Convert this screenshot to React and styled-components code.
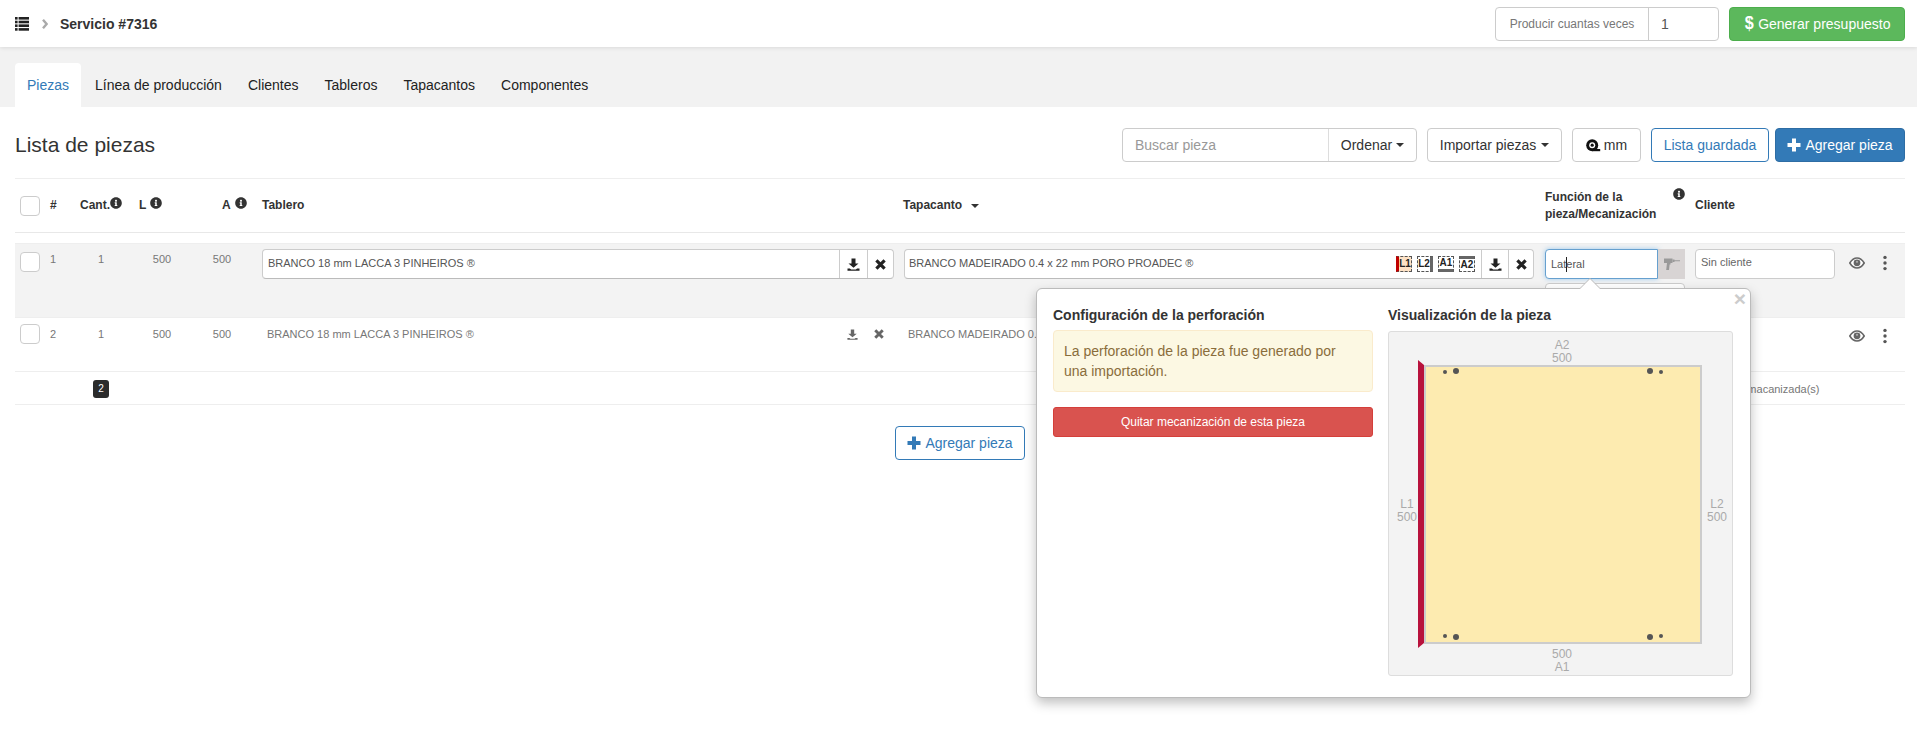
import React from 'react'
import styled, { createGlobalStyle } from 'styled-components'
import { FaInfoCircle } from 'react-icons/fa'

const GlobalStyle = createGlobalStyle`
  * { box-sizing: border-box; }
  html, body { margin: 0; padding: 0; background: #fff; }
  body {
    font-family: "Liberation Sans", Arial, sans-serif;
    font-size: 14px;
    line-height: 20px;
    color: #333;
    overflow: hidden;
  }
`

const Page = styled.div`
  position: relative;
  width: 1917px;
  height: 749px;
  overflow: hidden;
`

const TopBar = styled.header`
  position: relative;
  z-index: 2;
  display: flex;
  justify-content: space-between;
  align-items: center;
  height: 47px;
  padding: 0 12px 0 15px;
  background: #fff;
  box-shadow: 0 1px 4px rgba(0, 0, 0, 0.1);
`

const Crumb = styled.div`
  display: flex;
  align-items: center;
  gap: 13px;
  color: #333;
  font-weight: 700;
  font-size: 14px;

  .angle {
    margin-right: -1px;
  }
`

const TopActions = styled.div`
  display: flex;
  gap: 10px;
`

const Group = styled.div`
  display: flex;
  height: 34px;
  width: ${({ $w }) => $w}px;
  border: 1px solid #ccc;
  border-radius: 4px;
  background: #fff;
`

const GroupLabel = styled.span`
  display: flex;
  align-items: center;
  justify-content: center;
  width: 153px;
  border-right: 1px solid #ccc;
  color: #777;
  font-size: 12px;
`

const TextInput = styled.input`
  flex: 1;
  min-width: 0;
  border: 0;
  outline: 0;
  background: transparent;
  padding: 0 12px;
  font: inherit;
  font-size: 14px;
  color: #555;

  &::placeholder {
    color: #999;
  }
`

const Btn = styled.button`
  display: inline-flex;
  align-items: center;
  justify-content: center;
  gap: ${({ $gap }) => $gap ?? 5}px;
  height: 34px;
  width: ${({ $w }) => $w}px;
  margin-left: ${({ $ml }) => $ml ?? 0}px;
  padding: 0;
  border: 1px solid ${({ $tone }) => ($tone === 'green' ? '#4cae4c' : $tone === 'blue' ? '#2e6da4' : $tone === 'outline' ? '#337ab7' : '#ccc')};
  border-radius: 4px;
  background: ${({ $tone }) => ($tone === 'green' ? '#5cb85c' : $tone === 'blue' ? '#337ab7' : '#fff')};
  color: ${({ $tone }) => ($tone === 'green' || $tone === 'blue' ? '#fff' : $tone === 'outline' ? '#337ab7' : '#333')};
  font: inherit;
  font-size: 14px;
  white-space: nowrap;
`

const Dollar = styled.span`
  font-size: 19px;
  font-weight: 700;
  line-height: 20px;
  margin-top: -2px;
  transform: scaleX(0.85);
`

const Caret = styled.i`
  display: inline-block;
  width: 0;
  height: 0;
  border-top: 4px solid #333;
  border-left: 4px solid transparent;
  border-right: 4px solid transparent;
`

const Tabs = styled.nav`
  display: flex;
  gap: 2px;
  height: 60px;
  padding: 16px 0 0 15px;
  background: #f2f2f2;
`

const Tab = styled.a`
  height: 44px;
  padding: 12px 12px 0;
  border-radius: 4px 4px 0 0;
  background: ${({ $active }) => ($active ? '#fff' : 'transparent')};
  color: ${({ $active }) => ($active ? '#337ab7' : '#222')};
`

const Content = styled.main`
  padding: 21px 12px 0 15px;
`

const TitleRow = styled.div`
  display: flex;
  justify-content: space-between;
  align-items: center;
  height: 34px;
  margin-bottom: 16px;
`

const Title = styled.h2`
  margin: 0;
  font-size: 21px;
  font-weight: 400;
  color: #333;
`

const Tools = styled.div`
  display: flex;
  gap: 10px;
`

const GroupBtn = styled.span`
  display: flex;
  align-items: center;
  justify-content: center;
  gap: 4px;
  width: 88px;
  border-left: 1px solid #ddd;
  color: #333;
`

const Cols = `
  display: grid;
  grid-template-columns: 35px 30px 59px 63px 60px 641px 642px 150px 150px 60px;
`

const TableHead = styled.div`
  ${Cols}
  align-items: center;
  height: 55px;
  border-top: 1px solid #eee;
  border-bottom: 1px solid #e8e8e8;
  margin-bottom: 10px;
`

const HeadCell = styled.div`
  display: flex;
  align-items: center;
  gap: ${({ $gap }) => $gap ?? 0}px;
  padding-left: ${({ $pl }) => $pl ?? 0}px;
  font-size: 12px;
  font-weight: 700;
  line-height: 17px;
  color: #333;

  svg.info {
    width: 12px;
    height: 12px;
    margin-top: -5px;
    color: #333;
  }
  svg.info.high {
    margin-top: -24px;
  }
`

const HeadCaret = styled(Caret)`
  margin-left: -1px;
`

const FnLabel = styled.div`
  width: 128px;
`

const Check = styled.span`
  display: block;
  width: 20px;
  height: 20px;
  margin: ${({ $mt }) => $mt ?? 0}px 0 0 5px;
  border: 1px solid #ccc;
  border-radius: 4px;
  background: #fff;
`

const Row = styled.div`
  ${Cols}
  position: relative;
  height: ${({ $h }) => $h}px;
  padding-top: ${({ $pt }) => $pt}px;
  border-top: 1px solid #eee;
  background: ${({ $active }) => ($active ? '#f3f3f3' : '#fff')};
  font-size: 11px;
  color: #777;
`

const Num = styled.div`
  width: ${({ $w }) => $w}px;
  line-height: 20px;
  text-align: center;
`

const Field = styled.div`
  display: flex;
  align-items: stretch;
  height: 30px;
  width: ${({ $w }) => $w}px;
  margin-left: ${({ $ml }) => $ml ?? 0}px;
  border: 1px solid #ccc;
  border-bottom-color: #bbb;
  border-radius: 4px;
  background: #fff;
  font-size: 11px;
  color: #555;
`

const FieldText = styled.span`
  flex: 1;
  padding: 0 4px 0 ${({ $pl }) => $pl ?? 4}px;
  line-height: 27px;
  white-space: nowrap;
`

const AddOn = styled.span`
  display: flex;
  align-items: center;
  justify-content: center;
  width: ${({ $w }) => $w ?? 27}px;
  border-left: 1px solid #ccc;
  color: #222;
`

const Edges = styled.span`
  display: flex;
  align-items: center;
  gap: 5px;
  padding-right: 6px;
`

const borderFor = ({ $side }) => {
  if ($side === 'L1') return 'border-left: 3px solid #c00000; background: #fde2c6;'
  if ($side === 'L2') return 'border-right: 3px solid #666;'
  if ($side === 'A1') return 'border-bottom: 3px solid #666;'
  return 'border-top: 3px solid #666;'
}

const Edge = styled.span`
  display: flex;
  align-items: center;
  justify-content: center;
  width: 16px;
  height: 16px;
  border: 1px dashed #555;
  font-size: 10px;
  font-weight: 700;
  color: #222;
  ${borderFor}
`

const PlainCell = styled.div`
  display: flex;
  align-items: flex-start;
  width: ${({ $w }) => $w}px;
  padding-left: ${({ $pl }) => $pl}px;
  line-height: 20px;
  white-space: nowrap;
  color: #777;
`

const GhostIcons = styled.div`
  display: flex;
  align-items: center;
  gap: 16px;
  height: 20px;
  margin-left: auto;
  padding-right: 10px;
  color: #666;
`

const FnStack = styled.div`
  display: flex;
  flex-direction: column;
  gap: 4px;
  width: 140px;
`

const FnGroup = styled.div`
  display: flex;
  height: 30px;
`

const FnInput = styled.div`
  display: flex;
  align-items: center;
  width: 113px;
  padding-left: 5px;
  border: 1px solid #66a0cf;
  border-radius: 4px 0 0 4px;
  background: #fff;
  box-shadow: 0 0 5px rgba(102, 175, 233, 0.6);
  font-size: 11px;
  color: #555;
`

const TextCaret = styled.i`
  display: inline-block;
  width: 0;
  height: 15px;
  margin-right: -1px;
  border-left: 1px solid #222;
`

const FnAddOn = styled.span`
  display: flex;
  align-items: center;
  justify-content: center;
  width: 27px;
  background: #d8d4d4;
  color: #999;
`

const GhostInput = styled.div`
  height: 30px;
  border: 1px solid #ccc;
  border-radius: 4px;
  background: #fff;
`

const ClientField = styled.div`
  width: 140px;
  height: 30px;
  padding: 2px 5px 0;
  border: 1px solid #ccc;
  border-radius: 4px;
  background: #fff;
  font-size: 11px;
  line-height: 20px;
  color: #666;
`

const RowActions = styled.div`
  display: flex;
  align-items: center;
  gap: 18px;
  height: ${({ $h }) => $h}px;
  padding-left: 4px;
`

const Foot = styled.div`
  ${Cols}
  position: relative;
  height: 34px;
  padding-top: 2px;
  border-top: 1px solid #eee;
  border-bottom: 1px solid #eee;
  align-items: center;
  font-size: 11px;
  color: #777;
`

const Badge = styled.span`
  display: flex;
  align-items: center;
  justify-content: center;
  width: 16px;
  height: 18px;
  margin-left: 13px;
  border-radius: 3px;
  background: #2b2b2b;
  color: #fff;
  font-size: 10px;
`

const FootNote = styled.span`
  grid-column: 9 / 11;
  white-space: nowrap;
  padding-left: 1px;
`

const AddMore = styled.div`
  display: flex;
  justify-content: center;
  margin-top: 21px;
`

const Popover = styled.aside`
  position: absolute;
  z-index: 5;
  top: 288px;
  left: 1036px;
  display: grid;
  grid-template-columns: 320px 345px;
  column-gap: 15px;
  width: 715px;
  height: 410px;
  padding: 16px 16px 0;
  border: 1px solid #bbb;
  border-radius: 6px;
  background: #fff;
  box-shadow: 0 5px 12px rgba(0, 0, 0, 0.25);

  &::before,
  &::after {
    content: '';
    position: absolute;
    left: 543px;
    width: 0;
    height: 0;
    border-left: 10px solid transparent;
    border-right: 10px solid transparent;
  }
  &::before {
    top: -11px;
    border-bottom: 10px solid #bbb;
  }
  &::after {
    top: -10px;
    border-bottom: 10px solid #fff;
  }
`

const CloseX = styled.span`
  position: absolute;
  top: 0;
  right: 4px;
  color: #ccc;
  font-size: 21px;
  font-weight: 700;
  line-height: 20px;
`

const PopTitle = styled.h4`
  margin: 0;
  font-size: 14px;
  font-weight: 700;
  line-height: 20px;
  color: #333;
`

const Alert = styled.div`
  margin-top: 5px;
  padding: 10px;
  border: 1px solid #faebcc;
  border-radius: 4px;
  background: #fcf8e3;
  color: #8a6d3b;
`

const DangerBtn = styled.button`
  display: block;
  width: 100%;
  height: 30px;
  margin-top: 15px;
  border: 1px solid #d43f3a;
  border-radius: 3px;
  background: #d9534f;
  color: #fff;
  font: inherit;
  font-size: 12px;
`

const Preview = styled.div`
  width: 345px;
  height: 345px;
  margin-top: 6px;
  border: 1px solid #ddd;
  border-radius: 3px;
  background: #f3f3f3;

  svg {
    display: block;
  }
  text {
    font-family: "Liberation Sans", Arial, sans-serif;
    font-size: 12px;
    fill: #aaa;
    text-anchor: middle;
  }
`

const ListIcon = () => (
  <svg width='14' height='14' viewBox='0 0 14 14' fill='#222'>
    {[0, 3.7, 7.4, 11.1].map((y) => (
      <g key={y}>
        <rect x='0' y={y} width='2.6' height='2.6' />
        <rect x='3.6' y={y} width='10.4' height='2.6' />
      </g>
    ))}
  </svg>
)

const AngleIcon = () => (
  <svg className='angle' width='6' height='10' viewBox='0 0 6 10' fill='none' stroke='#aaa' strokeWidth='2.4'>
    <path d='M1 0.8L4.6 5L1 9.2' />
  </svg>
)

const PlusIcon = () => (
  <svg width='14' height='14' viewBox='0 0 14 14' fill='currentColor'>
    <path d='M5 0.5h4v4.5h4.5v4H9v4.5H5V9H0.5V5H5z' />
  </svg>
)

const TapeIcon = () => (
  <svg width='15' height='13' viewBox='0 0 15 13'>
    <circle cx='6.2' cy='6.2' r='6' fill='#111' />
    <circle cx='6.2' cy='6.2' r='3' fill='#fff' />
    <circle cx='6.2' cy='6.2' r='1.6' fill='#111' />
    <rect x='6.2' y='10' width='8' height='2.2' fill='#111' />
  </svg>
)

const DownloadIcon = ({ size = 13 }) => (
  <svg width={size} height={size} viewBox='0 0 13 13' fill='currentColor'>
    <path d='M4.5 0.5h4v5h3L6.5 9.8 1.5 5.5h3z' />
    <path d='M0.5 10.5h2.4l1.2 0.9h4.8l1.2-0.9h2.4v2.2H0.5z' />
  </svg>
)

const RemoveIcon = ({ size = 11 }) => (
  <svg width={size} height={size} viewBox='0 0 11 11' fill='none' stroke='currentColor' strokeWidth='3.2'>
    <path d='M1.4 1.4L9.6 9.6M9.6 1.4L1.4 9.6' />
  </svg>
)

const DrillIcon = () => (
  <svg width='16' height='12' viewBox='0 0 16 12' fill='currentColor'>
    <path d='M0 0.5h8.5v4.5H6.5v1.5H5.6L5 12H2.2L3 5H0z' />
    <path d='M8.5 1.5h2v2.5h-2zM10.5 2.3h5.5v.9h-5.5z' />
  </svg>
)

const EyeIcon = () => (
  <svg width='16' height='12' viewBox='0 0 16 12'>
    <path d='M0.8 6C3 2.4 5.4 1 8 1s5 1.4 7.2 5C13 9.6 10.6 11 8 11S3 9.6 0.8 6z' fill='#fff' stroke='#666' strokeWidth='1.6' />
    <circle cx='8' cy='5.8' r='3.4' fill='#666' />
    <circle cx='8' cy='4.8' r='1.1' fill='#aaa' />
  </svg>
)

const DotsIcon = () => (
  <svg width='4' height='16' viewBox='0 0 4 16' fill='#555'>
    <circle cx='2' cy='2.4' r='1.7' />
    <circle cx='2' cy='8' r='1.7' />
    <circle cx='2' cy='13.6' r='1.7' />
  </svg>
)

const holes = [
  [56, 40, 2],
  [67, 39, 3],
  [261, 39, 3],
  [272, 40, 2],
  [56, 304, 2],
  [67, 305, 3],
  [261, 305, 3],
  [272, 304, 2],
]

// preview of the piece: L1 edge banded, holes in the corners
const PieceDrawing = () => (
  <svg width='343' height='343' viewBox='0 0 343 343'>
    <text x='173' y='17'>A2</text>
    <text x='173' y='30'>500</text>
    <polygon points='29,28 35,33 35,311 29,316' fill='#b8123c' />
    <rect x='36' y='34' width='276' height='277' fill='#fdebb0' stroke='#ccc' strokeWidth='2' />
    {holes.map(([x, y, r]) => (
      <circle key={`${x}-${y}`} cx={x} cy={y} r={r} fill='#555' />
    ))}
    <text x='18' y='176'>L1</text>
    <text x='18' y='189'>500</text>
    <text x='328' y='176'>L2</text>
    <text x='328' y='189'>500</text>
    <text x='173' y='326'>500</text>
    <text x='173' y='339'>A1</text>
  </svg>
)

const App = () => {
  return (
    <Page>
      <GlobalStyle />
      <TopBar>
        <Crumb>
          <ListIcon />
          <AngleIcon />
          Servicio #7316
        </Crumb>
        <TopActions>
          <Group $w={224}>
            <GroupLabel>Producir cuantas veces</GroupLabel>
            <TextInput defaultValue='1' />
          </Group>
          <Btn $tone='green' $w={176} $gap={4}>
            <Dollar>$</Dollar>
            Generar presupuesto
          </Btn>
        </TopActions>
      </TopBar>

      <Tabs>
        <Tab $active>Piezas</Tab>
        <Tab>Línea de producción</Tab>
        <Tab>Clientes</Tab>
        <Tab>Tableros</Tab>
        <Tab>Tapacantos</Tab>
        <Tab>Componentes</Tab>
      </Tabs>

      <Content>
        <TitleRow>
          <Title>Lista de piezas</Title>
          <Tools>
            <Group $w={295}>
              <TextInput placeholder='Buscar pieza' />
              <GroupBtn>
                Ordenar
                <Caret />
              </GroupBtn>
            </Group>
            <Btn $w={135}>
              Importar piezas
              <Caret />
            </Btn>
            <Btn $w={69} $gap={3}>
              <TapeIcon />
              mm
            </Btn>
            <Btn $tone='outline' $w={118}>Lista guardada</Btn>
            <Btn $tone='blue' $w={130} $ml={-4} $gap={4}>
              <PlusIcon />
              Agregar pieza
            </Btn>
          </Tools>
        </TitleRow>

        <TableHead>
          <Check />
          <HeadCell>#</HeadCell>
          <HeadCell>
            Cant.
            <FaInfoCircle className='info' />
          </HeadCell>
          <HeadCell $gap={4}>
            L
            <FaInfoCircle className='info' />
          </HeadCell>
          <HeadCell $gap={4} $pl={20}>
            A
            <FaInfoCircle className='info' />
          </HeadCell>
          <HeadCell>Tablero</HeadCell>
          <HeadCell $gap={10}>
            Tapacanto
            <HeadCaret />
          </HeadCell>
          <HeadCell>
            <FnLabel>Función de la pieza/Mecanización</FnLabel>
            <FaInfoCircle className='info high' />
          </HeadCell>
          <HeadCell>Cliente</HeadCell>
          <div />
        </TableHead>

        <Row $active $h={74} $pt={5}>
          <Check $mt={3} />
          <div>1</div>
          <Num $w={42}>1</Num>
          <Num $w={46}>500</Num>
          <Num $w={40}>500</Num>
          <Field $w={632}>
            <FieldText $pl={5}>BRANCO 18 mm LACCA 3 PINHEIROS ®</FieldText>
            <AddOn $w={28}><DownloadIcon /></AddOn>
            <AddOn $w={26}><RemoveIcon /></AddOn>
          </Field>
          <Field $w={630} $ml={1}>
            <FieldText>BRANCO MADEIRADO 0.4 x 22 mm PORO PROADEC ®</FieldText>
            <Edges>
              <Edge $side='L1'>L1</Edge>
              <Edge $side='L2'>L2</Edge>
              <Edge $side='A1'>A1</Edge>
              <Edge $side='A2'>A2</Edge>
            </Edges>
            <AddOn><DownloadIcon /></AddOn>
            <AddOn $w={25}><RemoveIcon /></AddOn>
          </Field>
          <FnStack>
            <FnGroup>
              <FnInput>
                Lat
                <TextCaret />
                eral
              </FnInput>
              <FnAddOn><DrillIcon /></FnAddOn>
            </FnGroup>
            <GhostInput />
          </FnStack>
          <ClientField>Sin cliente</ClientField>
          <RowActions $h={28}>
            <EyeIcon />
            <DotsIcon />
          </RowActions>
        </Row>

        <Row $h={54} $pt={6}>
          <Check />
          <div>2</div>
          <Num $w={42}>1</Num>
          <Num $w={46}>500</Num>
          <Num $w={40}>500</Num>
          <PlainCell $w={632} $pl={5}>
            BRANCO 18 mm LACCA 3 PINHEIROS ®
            <GhostIcons>
              <DownloadIcon size={11} />
              <RemoveIcon size={10} />
            </GhostIcons>
          </PlainCell>
          <PlainCell $w={631} $pl={5}>BRANCO MADEIRADO 0.4 x 22 mm PORO PROADEC ®</PlainCell>
          <div />
          <div />
          <RowActions $h={24}>
            <EyeIcon />
            <DotsIcon />
          </RowActions>
        </Row>

        <Foot>
          <div />
          <div />
          <Badge>2</Badge>
          <FootNote>2 pieza(s) macanizada(s)</FootNote>
        </Foot>

        <AddMore>
          <Btn $tone='outline' $w={130} $gap={4}>
            <PlusIcon />
            Agregar pieza
          </Btn>
        </AddMore>
      </Content>

      <Popover>
        <CloseX>×</CloseX>
        <div>
          <PopTitle>Configuración de la perforación</PopTitle>
          <Alert>La perforación de la pieza fue generado por una importación.</Alert>
          <DangerBtn>Quitar mecanización de esta pieza</DangerBtn>
        </div>
        <div>
          <PopTitle>Visualización de la pieza</PopTitle>
          <Preview>
            <PieceDrawing />
          </Preview>
        </div>
      </Popover>
    </Page>
  )
}

export default App
